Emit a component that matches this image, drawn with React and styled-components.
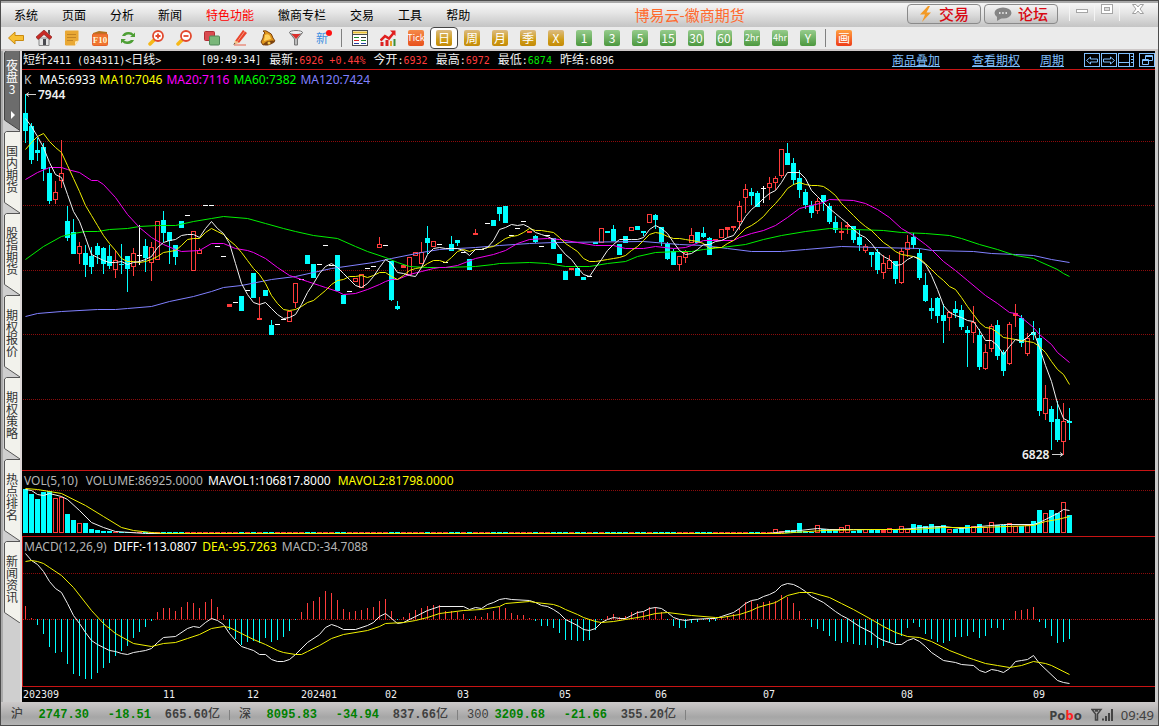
import React, { useState } from 'react'
import styled, { createGlobalStyle, css } from 'styled-components'

const CYAN = '#00ffff'
const RED = '#ff3c3c'
const LINE = '#c81414'

const menus = ['系统', '页面', '分析', '新闻', '特色功能', '徽商专栏', '交易', '工具', '帮助']
const sideTabs = ['国内期货', '股指期货', '期权报价', '期权策略', '热点排名', '新闻资讯']

const periods = [
  { text: '日', tone: 'gold' },
  { text: '周', tone: 'gold' },
  { text: '月', tone: 'gold' },
  { text: '季', tone: 'gold' },
  { text: 'X', tone: 'gold' },
  { text: '1' },
  { text: '3' },
  { text: '5' },
  { text: '15' },
  { text: '30' },
  { text: '60' },
  { text: '2hr', small: true },
  { text: '4hr', small: true },
  { text: 'Y' },
]

const quotes = [
  { label: '今开', value: '6932', color: RED },
  { label: '最高', value: '6972', color: RED },
  { label: '最低', value: '6874', color: '#00e600' },
  { label: '昨结', value: '6896', color: '#f0f0f0' },
]

const indexes = [
  { name: '沪', price: '2747.30', change: '-18.51', amount: '665.60' },
  { name: '深', price: '8095.83', change: '-34.94', amount: '837.66' },
  { name: '300', price: '3209.68', change: '-21.66', amount: '355.20' },
]

const months = [
  [0, '202309', 'start'],
  [24, '11'],
  [38, '12'],
  [49, '202401'],
  [61, '02'],
  [73, '03'],
  [90, '05'],
  [106, '06'],
  [124, '07'],
  [147, '08'],
  [169, '09'],
]

// d = down, u = up, f = flat; high, body top, body bottom, low
const candles = `d 94 113 131 143,d 123 126 160 164,d 138 150 153 161,d 143 147 169 181,d 167 173 201 204,
u 181 192 200 204,u 140 173 181 188,d 206 221 238 241,d 219 232 254 254,u 242 246 254 264,
d 245 253 265 277,d 247 256 267 274,d 243 246 255 264,d 247 248 264 274,d 245 256 266 269,
u 250 260 270 278,d 244 264 265 274,d 256 256 269 292,u 248 253 267 276,f 225 255 265,
d 239 246 258 272,u 242 247 263 281,u 221 260,d 211 220 233 242,d 232 232 241 264,
d 245 245 257 265,d 221 228,f 215,u 231 271,u 248 250 254 254,
f 205,f 205,f 246,f 256,u 304 307,f 302,d 296 311,f 290,d 273 298,u 297 318 320 320,
d 290 296,d 320 325 335 335,f 324,f 319,u 311 322,u 283 283 303 308,f 279,d 255 264,d 264 278,f 264,
f 245,f 265,d 255 291,d 295 304,f 291,u 278 282,u 274 288,f 268,f 266,u 237 244 248 248,
f 245,d 261 261 300 301,d 301 306 309 310,u 265 268,u 257 275,u 252 256,u 242 252 264 264,d 226 238 243 254,u 241 247,f 244,
f 262,d 236 244 251 251,d 240 240 243 246,f 252,d 259 270,u 229 233 235 235,f 249,f 223,d 220 226,d 207 207 214 221,
d 206 223,f 235,f 228,f 221,u 231 233,d 235 236 242 243,f 246,f 235,d 238 249,d 254 263,
d 271 280,u 268 270,d 268 276,d 277 280,f 276,d 242 244,u 228 243,d 231 233,d 225 229 241 241,d 244 255,
d 236 243,u 227 231,d 226 230,d 231 231 233 236,u 214 223,d 214 215 220 229,d 227 227 242 246,d 242 244 259 260,d 249 251 265 265,u 256 256 265 271,
u 250 252 258 263,u 228 235 243 243,d 232 243,d 227 233 237 238,d 237 238 255 255,u 239 241,u 229 238,u 227 227 230 237,u 226 226 228 231,u 201 206 222 230,
u 184 189 198 213,d 188 192 196 205,d 191 193 207 207,f 186 188 203,u 177 183 188 200,u 176 178 183 190,u 149 149 176 178,d 143 153 165 165,d 158 163 180 185,d 170 178 190 198,
d 189 192 205 209,d 201 205 213 218,u 198 201 211 214,d 195 195 202 211,d 203 206 222 224,d 216 222 230 233,u 222 231 233 240,u 222 225 227 234,d 226 226 240 243,d 230 237 245 251,
u 244 246 251 253,d 252 252 255 267,d 249 252 270 274,u 255 263 273 279,u 255 260 269 269,d 261 261 279 284,u 248 251 283 284,u 235 242 250 257,d 233 237 245 249,d 249 253 278 280,
d 273 285 301 302,d 298 308 311 319,d 297 298 316 323,d 304 315 321 343,u 311 312 318 331,d 301 309 313 318,d 305 310 327 330,d 326 330 333 367,u 306 322 333 343,d 329 335 367 370,
u 344 352 369 370,u 324 326 349 352,d 320 325 356 360,d 350 352 371 376,u 322 324 364 365,u 304 313 316 327,d 315 318 343 347,u 333 338 354 356,d 321 332 335 340,d 328 338 411 416,
u 385 398 414 420,d 406 409 422 450,d 401 419 440 442,u 403 421 442 455,d 408 421 423 440`
  .split(',')
  .map((row) => {
    const [kind, ...rest] = row.trim().split(' ')
    const n = rest.map(Number)
    if (n.length === 1) return { kind, high: n[0], top: n[0], bottom: n[0] + 1, low: n[0] + 1 }
    if (n.length === 2) return { kind, high: n[0], top: n[0], bottom: n[1], low: n[1] }
    if (n.length === 3) return { kind, high: n[0], top: n[1], bottom: n[1] + 1, low: n[2] }
    return { kind, high: n[0], top: n[1], bottom: n[2], low: n[3] }
  })

const ma5 = [
  118, 126, 136, 147, 162, 174, 177, 194, 211, 221, 237, 254, 257, 260, 262, 262, 261, 264, 262, 261,
  259, 256, 247, 242, 240, 239, 235, 234, 234, 237, 228, 221, 228, 233, 243, 263, 283, 294, 302, 304,
  302, 308, 314, 318, 317, 314, 304, 292, 283, 273, 266, 263, 267, 273, 279, 285, 287, 283, 276, 267,
  259, 263, 272, 273, 275, 276, 267, 254, 248, 247, 248, 248, 248, 250, 255, 249, 249, 247, 240, 229,
  227, 224, 225, 224, 227, 232, 234, 236, 239, 247, 254, 259, 267, 274, 276, 267, 259, 250, 244, 239,
  239, 239, 239, 237, 229, 225, 228, 233, 242, 250, 254, 253, 249, 244, 244, 241, 240, 237, 235, 226,
  216, 209, 204, 198, 193, 190, 182, 172, 172, 172, 178, 190, 196, 202, 208, 213, 218, 223, 229, 234,
  237, 243, 251, 256, 259, 265, 264, 259, 256, 259, 264, 275, 289, 305, 312, 315, 317, 320, 321, 330,
  340, 340, 345, 354, 346, 339, 341, 337, 331, 347, 365, 381, 403, 418, 421,
]

const ma10 = [
  149, 142, 136, 133, 141, 147, 152, 165, 178, 191, 205, 215, 225, 235, 243, 250, 258, 261, 261, 262,
  261, 259, 256, 252, 251, 250, 245, 239, 238, 238, 232, 228, 231, 234, 240, 245, 252, 260, 268, 274,
  283, 295, 303, 309, 310, 309, 306, 302, 300, 295, 290, 284, 280, 279, 276, 276, 275, 277, 275, 272,
  272, 276, 279, 275, 270, 268, 267, 263, 260, 260, 262, 257, 251, 249, 251, 249, 249, 247, 246, 242,
  238, 236, 235, 232, 228, 230, 230, 231, 232, 237, 243, 247, 251, 258, 261, 261, 260, 259, 258, 257,
  255, 250, 246, 240, 234, 232, 233, 236, 238, 238, 239, 240, 241, 243, 248, 247, 247, 243, 240, 234,
  228, 225, 221, 216, 209, 203, 196, 188, 184, 182, 184, 185, 185, 186, 190, 195, 203, 209, 215, 221,
  226, 230, 236, 242, 246, 251, 254, 255, 256, 258, 263, 269, 275, 280, 286, 289, 297, 306, 314, 322,
  327, 328, 332, 337, 338, 339, 340, 341, 342, 346, 352, 361, 369, 374, 384,
]

// slow lines: "bar index,y"
const ma20 =
  '0,179 2,172 4,167 6,167 7,169 9,172 11,180 12,180 13,184 15,197 17,214 19,227 21,237 23,244 25,249 26,251 29,250 31,243 33,243 35,248 37,250 38,252 39,255 40,258 42,267 44,275 45,277 47,281 49,285 50,287 52,291 53,294 55,293 57,289 59,284 60,281 61,279 62,279 64,274 66,271 68,268 69,267 70,267 72,265 75,258 78,254 79,252 80,250 82,243 84,239 87,238 89,239 92,242 95,245 98,245 100,248 103,248 105,246 108,248 110,247 111,245 113,240 118,240 119,237 121,233 123,230 125,225 127,217 129,208 131,205 133,202 134,199 138,200 140,203 142,209 144,217 146,228 148,235 150,244 151,249 153,261 155,270 157,280 160,295 162,303 164,312 165,313 166,317 168,327 169,334 171,344 172,352 174,362'
const ma60 =
  '0,259 3,246 6,236 8,233 10,231 12,231 14,229 17,228 19,226 22,225 25,225 28,221 31,218 33,216 37,218 40,223 43,228 45,231 48,235 52,238 55,246 57,251 60,257 62,262 64,266 67,267 70,267 75,266 78,264 79,263 84,262 87,263 90,266 94,266 97,263 100,261 102,256 105,252 109,251 111,251 113,249 116,247 120,244 123,239 126,235 130,231 134,228 138,229 143,230 146,232 150,233 154,235 156,238 159,244 162,249 165,255 168,258 169,261 172,269 173,273 174,276'
const ma120 =
  '0,316 2,313 6,311 12,309 15,309 17,308 21,306 24,301 28,296 31,291 33,287 36,285 41,279 45,276 48,272 51,268 58,262 61,258 66,252 69,249 72,248 75,247 79,245 84,243 88,242 103,241 109,244 113,245 117,248 121,251 126,251 130,249 136,246 142,247 149,248 151,250 158,251 161,253 165,254 168,255 171,259 174,262'
const mavol1 =
  '0,489 1,490 2,494 3,495 4,493 6,496 7,499 9,510 11,522 13,527 15,531 20,533 124,533 125,532 127,531 129,530 132,528 134,529 138,529 141,529 145,529 148,528 149,527 153,526 156,528 159,526 163,524 168,524 169,522 172,513 173,509 174,510'
const mavol2 =
  '0,488 2,489 6,493 10,505 13,516 16,527 18,530 21,532 23,533 126,533 128,532 133,530 141,529 148,529 153,527 159,527 168,525 170,521 172,519 174,516'
const diff =
  '0,553 1,560 2,564 3,571 4,581 5,588 6,592 7,603 8,615 9,623 10,632 11,640 12,644 13,647 14,650 15,651 16,653 17,654 18,652 19,651 20,650 21,648 22,642 23,637 25,636 27,628 28,626 29,627 30,622 31,618 32,620 33,624 34,633 35,640 36,646 37,648 38,650 39,654 40,654 41,659 42,661 43,661 44,659 45,654 47,642 49,634 50,627 51,624 52,626 53,629 55,629 57,625 58,622 59,616 60,613 61,618 62,623 63,622 65,616 67,610 69,606 73,606 74,609 75,607 76,608 77,604 78,602 79,599 80,598 81,599 84,600 85,602 86,605 87,606 88,609 89,613 90,619 92,625 93,629 94,630 95,628 96,622 97,619 98,617 99,618 100,618 101,615 102,612 103,611 104,608 105,607 106,608 107,612 108,617 109,619 110,620 111,619 114,618 115,618 116,616 118,612 119,608 120,603 121,600 122,599 123,596 124,594 125,591 126,585 127,583 128,584 129,587 130,591 131,596 132,599 133,602 135,611 136,615 137,618 139,626 141,632 142,637 143,640 144,642 145,644 146,644 147,640 148,638 149,641 150,646 151,652 153,660 155,662 156,664 158,665 159,670 160,672 161,669 162,670 163,672 164,668 165,661 166,660 167,659 168,655 169,663 172,680 173,682 174,683'
const dea =
  '0,561 1,560 2,561 3,563 4,567 6,575 8,587 11,610 13,623 15,633 18,643 21,646 23,643 25,642 27,638 29,634 31,628 33,626 34,627 36,633 38,639 40,644 42,650 43,652 45,654 46,654 47,651 49,645 51,638 53,634 57,630 59,626 60,623 63,622 65,620 67,617 69,613 73,610 76,609 79,606 80,603 84,601 85,602 88,604 89,606 90,609 92,614 93,617 95,621 96,622 98,621 100,619 103,616 105,613 107,612 111,615 115,617 116,617 119,614 121,610 122,607 125,602 127,595 129,592 131,592 134,597 136,603 138,609 141,619 143,626 145,632 147,636 149,637 151,641 154,650 157,657 158,659 160,663 162,665 164,667 166,665 168,661 170,663 171,665 174,674'

const volumeHead = [489, 494, 499, 492, 491, 498, 497, 514, 520, 523, 523, 529, 530, 531, 531]
const volumeTail = [
  529, 531, 530, 530, 523, 531, 532, 525, 529, 529, 530, 527, 525, 531, 529, 529, 529, 529, 530, 528,
  529, 526, 529, 524, 525, 526, 524, 526, 525, 529, 529, 527, 525, 526, 524, 527, 522, 525, 525, 523,
  526, 526, 525, 521, 510, 513, 510, 513, 502, 515,
]
const volumeTop = (i) => volumeHead[i] || volumeTail[i - 125] || 532

const macd = [
  606, 618, 625, 634, 647, 653, 652, 664, 674, 676, 679, 679, 673, 668, 663, 656, 651, 646, 638, 632,
  627, 621, 612, 608, 608, 611, 607, 602, 603, 608, 602, 599, 607, 615, 630, 639, 645, 642, 641, 643,
  638, 642, 640, 637, 631, 620, 612, 603, 601, 597, 591, 593, 600, 609, 612, 611, 610, 608, 607, 601,
  599, 611, 620, 617, 613, 610, 608, 606, 605, 605, 611, 611, 612, 614, 620, 616, 617, 613, 611, 607,
  608, 613, 615, 615, 618, 621, 626, 626, 628, 633, 640, 640, 641, 641, 640, 630, 620, 616, 614, 617,
  616, 612, 611, 612, 607, 607, 612, 620, 626, 628, 628, 623, 622, 620, 622, 621, 617, 616, 614, 609,
  602, 601, 604, 602, 601, 601, 595, 597, 603, 611, 619, 627, 629, 631, 636, 641, 643, 642, 644, 645,
  645, 645, 648, 646, 643, 643, 636, 628, 623, 627, 634, 639, 642, 643, 641, 637, 637, 636, 632, 638,
  636, 628, 628, 630, 620, 611, 610, 609, 607, 622, 628, 636, 643, 642, 639,
]

const barX = (i) => 3 + i * 6
const fromList = (list) => list.map((y, i) => `${barX(i)},${y}`).join(' ')
const fromPairs = (str) =>
  str
    .split(' ')
    .map((p) => p.split(','))
    .map(([i, y]) => `${barX(Number(i))},${y}`)
    .join(' ')

function Curve({ points, color }) {
  return <polyline points={points} fill="none" stroke={color} strokeWidth="1" transform="translate(.5 .5)" />
}

function Grid({ y, color = '#8c0c0c' }) {
  return <line x1="1" x2="100%" y1={y + 0.5} y2={y + 0.5} stroke={color} strokeDasharray="1 1" shapeRendering="crispEdges" />
}

function Bar({ x, top, bottom, kind }) {
  if (kind === 'd') return <rect x={x - 2} y={top} width="5" height={Math.max(bottom - top, 1)} fill={CYAN} />
  if (bottom - top < 4) return <rect x={x - 2} y={top} width="5" height={bottom - top} fill={kind === 'f' ? '#fff' : RED} />
  return <rect x={x - 1.5} y={top + 0.5} width="4" height={bottom - top - 1} fill="#000" stroke={RED} />
}

function PricePlot() {
  return (
    <Plot role="img" aria-label="日线">
      <svg y="-88" overflow="visible">
        {[141, 205, 270, 334, 399].map((y) => <Grid key={y} y={y} />)}
        <g shapeRendering="crispEdges">
          {candles.map((c, i) => (
            <g key={i}>
              {c.low - c.high > 1 && (
                <rect x={barX(i)} y={c.high} width="1" height={c.low - c.high} fill={{ d: CYAN, u: RED, f: '#fff' }[c.kind]} />
              )}
              <Bar x={barX(i)} top={c.top} bottom={c.bottom} kind={c.kind} />
            </g>
          ))}
        </g>
        <Curve points={fromPairs(ma120)} color="#8080ff" />
        <Curve points={fromPairs(ma60)} color="#00f000" />
        <Curve points={fromPairs(ma20)} color="#f000f0" />
        <Curve points={fromList(ma10)} color="#f0f000" />
        <Curve points={fromList(ma5)} color="#f0f0f0" />
        <path d="M4 94.5H14M4 94.5l3-2M4 94.5l3 2" stroke="#d0d0d0" fill="none" />
        <MarkText x="16" y="99">7944</MarkText>
        <MarkText x="1000" y="459">6828</MarkText>
        <path d="M1030 454.5h11M1041 454.5l-3-2M1041 454.5l-3 2" stroke="#d0d0d0" fill="none" />
      </svg>
    </Plot>
  )
}

function VolumePlot() {
  return (
    <Plot role="img" aria-label="VOL">
      <svg y="-489" overflow="visible">
        <Grid y={490} />
        <g shapeRendering="crispEdges">
          {candles.map((c, i) => (
            <Bar key={i} x={barX(i)} top={volumeTop(i)} bottom={533} kind={c.kind === 'd' ? 'd' : 'u'} />
          ))}
        </g>
        <Curve points={fromPairs(mavol1)} color="#f0f0f0" />
        <Curve points={fromPairs(mavol2)} color="#f0f000" />
      </svg>
    </Plot>
  )
}

function MacdPlot() {
  return (
    <Plot role="img" aria-label="MACD">
      <svg y="-555" overflow="visible">
        <Grid y={573} />
        <Grid y={619} color="#c01818" />
        <g shapeRendering="crispEdges">
          {macd.map((y, i) => (
            <rect
              key={i}
              x={barX(i)}
              y={Math.min(y, 619)}
              width="1"
              height={Math.max(Math.abs(y - 619), 1)}
              fill={y < 619 ? RED : CYAN}
            />
          ))}
        </g>
        <Curve points={fromPairs(diff)} color="#f0f0f0" />
        <Curve points={fromPairs(dea)} color="#f0f000" />
      </svg>
    </Plot>
  )
}

const toolIcons = [
  {
    name: '后退',
    art: <path d="M.5 8 7 2v3.500h8.500v5H7V14z" fill="#f8c033" stroke="#c98a10" />,
  },
  {
    name: '首页',
    art: (
      <>
        <path d="M3 8h10v7.500H3z" fill="#e4e4e4" stroke="#888" />
        <path d="M8 0l8 7-2 2.500-6-5-6 5L0 7z" fill="#c92a25" stroke="#7c1512" strokeWidth=".6" />
        <path d="M12 0h2v5l-2-2z" fill="#555" />
        <path d="M7 9h3v6H7z" fill="#49494f" />
      </>
    ),
  },
  {
    name: '便笺',
    art: (
      <>
        <path d="M1 1.500Q1 .5 2 .5h12.500v10L11 15.500H2Q.5 15.500 1 13z" fill="#e9a834" />
        <path d="M3 4.500h9M3 7.500h9M3 10.500h6" stroke="#c28425" />
        <path d="M14.500 10.500 11 15.500v-4z" fill="#ffe7b0" />
      </>
    ),
  },
  {
    name: 'F10',
    art: (
      <>
        <path d="M1 3l6-2 8 1v3H1z" fill="#b2731d" />
        <rect x=".5" y="4" width="15" height="11.500" rx="1" fill="#f0752f" stroke="#e4622a" />
        <text x="8" y="13" textAnchor="middle" fontFamily="Liberation Serif, serif" fontWeight="700" fontSize="9" fill="#fff6d8">F10</text>
      </>
    ),
  },
  {
    name: '刷新',
    art: (
      <g fill="#4e9f35">
        <path d="M2 6Q4 1.500 9 2q3 .2 4.500 2L15 2.500V7H10l2-1.500Q8 3.500 5 6z" />
        <path d="M14 10q-2 4.500-7 4-3-.2-4.500-2L1 13.500V9h5l-2 1.500Q8 12.500 11 10z" />
      </g>
    ),
  },
  {
    name: '放大',
    art: (
      <>
        <path d="M6 10 2 14" stroke="#f6b818" strokeWidth="3.500" strokeLinecap="round" />
        <circle cx="10" cy="6" r="5" fill="#fff" stroke="#e2492e" strokeWidth="1.800" />
        <path d="M7.500 6h5M10 3.500v5" stroke="#e2492e" strokeWidth="1.800" />
      </>
    ),
  },
  {
    name: '缩小',
    art: (
      <>
        <path d="M6 10 2 14" stroke="#f6b818" strokeWidth="3.500" strokeLinecap="round" />
        <circle cx="10" cy="6" r="5" fill="#fff" stroke="#e2492e" strokeWidth="1.800" />
        <path d="M7.500 6h5" stroke="#e2492e" strokeWidth="1.800" />
      </>
    ),
  },
  {
    name: '叠加',
    art: (
      <>
        <rect x=".5" y="1.500" width="10" height="9" rx="1" fill="#d94b50" stroke="#b22e35" />
        <rect x="5.500" y="6" width="10" height="9" rx="1" fill="#79b679" stroke="#50885a" />
      </>
    ),
  },
  {
    name: '画线',
    art: (
      <>
        <path d="M3 11 11 0l4 3L7 13z" fill="#e8442c" />
        <path d="m5 12 8-11" stroke="#f79b80" />
        <path d="M3 10.500 1.500 15 7 13z" fill="#f3c489" />
        <path d="M1.500 15l.8-2 1.200 1z" fill="#333" />
        <path d="M2 15h12" stroke="#e89080" strokeWidth="1.500" />
      </>
    ),
  },
  {
    name: '预警',
    art: (
      <>
        <path d="M3 1q3-1 5 1 4 1 5 6l2 3-12 4-2-3 2-4Q3 4 5 3z" fill="#df951c" stroke="#7c4310" />
        <path d="M5 5q3-2 5 1l1 3-7 2z" fill="#ffd15b" />
        <ellipse cx="9" cy="13" rx="6" ry="2" fill="#7c4310" transform="rotate(-17 9 13)" />
        <circle cx="9" cy="13" r="1.500" fill="#f8c94b" />
      </>
    ),
  },
  {
    name: '筛选',
    art: (
      <>
        <path d="M1.500 2.500 6.500 9v6h3V9l5-6.500z" fill="#bbb" stroke="#777" />
        <ellipse cx="8" cy="2.500" rx="6.500" ry="2" fill="#eee" stroke="#777" />
        <path d="M3.500 4h9L8 9z" fill="#dc302c" />
      </>
    ),
  },
  {
    name: '新',
    art: (
      <>
        <text x="6" y="13" textAnchor="middle" fontFamily="Noto Sans CJK SC, sans-serif" fontSize="12" fill="#3e8fe0">新</text>
        <circle cx="13" cy="3" r="3" fill="#ff1010" />
      </>
    ),
  },
]

const viewIcons = [
  {
    name: '报价',
    art: (
      <>
        <rect x=".5" y=".5" width="15" height="15" fill="#fff" stroke="#4a4a4a" />
        <path d="M1 2.500h14" stroke="#e6bd33" strokeWidth="2" />
        <path d="M1 4.500h14" stroke="#4a4a4a" />
        <path d="M2 7.500h5" stroke="#1d8d2b" />
        <path d="M9 7.500h5" stroke="#333" />
        <path d="M2 10.500h5" stroke="#d22" />
        <path d="M9 10.500h5" stroke="#1d8d2b" />
        <path d="M2 13.500h5M9 13.500h5" stroke="#2540a0" />
      </>
    ),
  },
  {
    name: '走势',
    art: (
      <>
        <path d="M2 12v4M7 10v6" stroke="#d22" strokeWidth="3" />
        <path d="M11 11v5" stroke="#e6a826" strokeWidth="2" />
        <path d="M14.500 9v7" stroke="#3c8f3a" strokeWidth="2" />
        <path d="M.5 10.500 5 6l4 2.500 5-6" fill="none" stroke="#e01f1f" strokeWidth="2.500" />
        <path d="M10 .5h5.500V6z" fill="#e01f1f" />
      </>
    ),
  },
]

const paneIcons = [
  { name: '上一个', d: 'M2.500 7.500 6.500 4v2h7v3h-7v2z' },
  { name: '下一个', d: 'M13.500 7.500 9.500 4v2h-7v3h7v2z' },
  { name: '分栏', d: 'M1 9.500h10.500M11.500 1v12M13 3.500h2M13 6.500h2M13 9.500h2' },
  { name: '窗口', d: 'M6.500 6V2.500h7v5H10M6.500 3.500h7M3.500 6.500h6v5h-6zM3.500 7.500h6' },
]

export default function App() {
  const [period, setPeriod] = useState('日')

  return (
    <Frame>
      <GlobalStyle />
      <TitleBar>
        <Menu aria-label="菜单">
          {menus.map((m) => (
            <MenuItem key={m} $hot={m === '特色功能'}>{m}</MenuItem>
          ))}
        </Menu>
        <Title>博易云-徽商期货</Title>
        <BigButton>
          <svg width="14" height="16" viewBox="0 0 14 16" aria-hidden="true">
            <path d="M9 0 1 8.500h5L3 16l9-9.500H7.500L11 0z" fill="#f29a26" />
          </svg>
          交易
        </BigButton>
        <BigButton>
          <svg width="18" height="14" viewBox="0 0 18 14" aria-hidden="true">
            <ellipse cx="9" cy="6" rx="8.500" ry="5.500" fill="#858585" />
            <path d="M3 9v5l5-3z" fill="#858585" />
            <path d="M5 6h1.500M8.200 6h1.500M11.500 6H13" stroke="#fff" strokeWidth="1.500" />
          </svg>
          论坛
        </BigButton>
        <WindowButtons>
          <button aria-label="最小化">
            <svg width="14" height="12"><rect x="1.500" y="6.500" width="11" height="3" fill="#fff" stroke="#a5a5a5" /></svg>
          </button>
          <button aria-label="最大化">
            <svg width="14" height="12">
              <rect x="1.500" y="1.500" width="11" height="9" fill="#fff" stroke="#a5a5a5" />
              <rect x="4.500" y="4.500" width="5" height="3" fill="#ddd" stroke="#a5a5a5" />
            </svg>
          </button>
          <button aria-label="关闭">
            <svg width="14" height="12">
              <path d="M1.500 1.500h3.500l2 2.500 2-2.500h3.500L9 6l3.500 4.500H9L7 8l-2 2.500H1.500L5 6z" fill="#fff" stroke="#a0a0a0" />
            </svg>
          </button>
        </WindowButtons>
      </TitleBar>

      <Toolbar>
        {toolIcons.map((t) => <IconTool key={t.name} {...t} />)}
        <Divider />
        {viewIcons.map((t) => <IconTool key={t.name} {...t} />)}
        <Tool aria-label="Tick"><Badge $tone="tick" $small>Tick</Badge></Tool>
        {periods.map((p) => (
          <Tool key={p.text} $active={p.text === period} onClick={() => setPeriod(p.text)}>
            <Badge $tone={p.tone} $small={p.small}>{p.text}</Badge>
          </Tool>
        ))}
        <Divider />
        <Tool><Badge $tone="draw">画</Badge></Tool>
      </Toolbar>

      <Main>
        <SideBar>
          <SideTab $active>
            <TabShape viewBox="0 0 16 80" aria-hidden="true">
              <path d="M16-.5H2.500L.5 2V69L16 79.500z" fill="#6c6c6c" stroke="#444" />
              <path d="M7 60l4 4-4 4z" fill="#fff" />
            </TabShape>
            <span>夜盘3</span>
          </SideTab>
          {sideTabs.map((t) => (
            <SideTab key={t}>
              <TabShape viewBox="0 0 16 82" aria-hidden="true">
                <path d="M16 .5H2.500L.5 2V71.500L16 82" fill="#f2f2ec" stroke="#555" />
              </TabShape>
              <span>{t}</span>
            </SideTab>
          ))}
        </SideBar>

        <Charts>
          <QuoteRow>
            <Symbol>短纤<Num>2411 (034311)&lt;</Num>日线<Num>&gt;</Num></Symbol>
            <Num>[09:49:34]</Num>
            <span>最新<Num>:</Num><Num $color={RED}>6926 +0.44%</Num></span>
            {quotes.map((q) => (
              <span key={q.label}>{q.label}<Num>:</Num><Num $color={q.color}>{q.value}</Num></span>
            ))}
            <Links>
              <a href="#overlay">商品叠加</a>
              <a href="#options">查看期权</a>
              <a href="#period">周期</a>
            </Links>
            <PaneButtons>
              {paneIcons.map((p) => (
                <button key={p.name} aria-label={p.name}>
                  <svg width="16" height="14" viewBox="0 0 16 14"><path d={p.d} fill="none" stroke="#80c0ff" /></svg>
                </button>
              ))}
            </PaneButtons>
          </QuoteRow>

          <PricePane>
            <Legend>
              <Mark $color="#c0c0c0" $after={4}>K</Mark>
              <Mark $color="#ffffff">MA5:6933</Mark>
              <Mark $color="#ffff00">MA10:7046</Mark>
              <Mark $color="#ff00ff">MA20:7116</Mark>
              <Mark $color="#00ff00">MA60:7382</Mark>
              <Mark $color="#8080ff">MA120:7424</Mark>
            </Legend>
            <PricePlot />
          </PricePane>
          <VolumePane>
            <Legend $gap={5}>
              <Mark $color="#b4b4b4" $after={3}>VOL(5,10)</Mark>
              <Mark $color="#b4b4b4">VOLUME:86925.0000</Mark>
              <Mark $color="#ffffff" $after={2}>MAVOL1:106817.8000</Mark>
              <Mark $color="#ffff00">MAVOL2:81798.0000</Mark>
            </Legend>
            <VolumePlot />
          </VolumePane>
          <MacdPane>
            <Legend $gap={5}>
              <Mark $color="#b4b4b4" $after={2}>MACD(12,26,9)</Mark>
              <Mark $color="#ffffff">DIFF:-113.0807</Mark>
              <Mark $color="#ffff00">DEA:-95.7263</Mark>
              <Mark $color="#b4b4b4">MACD:-34.7088</Mark>
            </Legend>
            <MacdPlot />
          </MacdPane>
          <Axis aria-label="日期">
            {months.map(([i, text, anchor]) => (
              <AxisText key={text} x={anchor ? 1 : barX(i)} y="11" textAnchor={anchor || 'middle'}>{text}</AxisText>
            ))}
          </Axis>
        </Charts>
      </Main>

      <StatusBar>
        {indexes.map((x) => (
          <IndexGroup key={x.name}>
            <span>{x.name}</span>
            <Change>{x.price}</Change>
            <Change>{x.change}</Change>
            <Amount>{x.amount}<i>亿</i></Amount>
          </IndexGroup>
        ))}
        <Brand>Po<em>b</em>o</Brand>
        <svg width="22" height="14" aria-hidden="true">
          <path d="M1 1.500h9L6.500 6v6h-2V6zM4 3h3" fill="none" stroke="#444" strokeWidth="1.500" />
          <path d="M11 11.500h2M15 13V8M18 13V5M21 13V1" stroke="#444" strokeWidth="2" />
        </svg>
        <Clock>09:49</Clock>
      </StatusBar>
    </Frame>
  )
}

function IconTool({ name, art }) {
  return (
    <Tool aria-label={name}>
      <svg width="16" height="16" viewBox="0 0 16 16">{art}</svg>
    </Tool>
  )
}

const GlobalStyle = createGlobalStyle`
  * { box-sizing: border-box; }
  body {
    margin: 0;
    background: #cbcbcb;
    font-family: "Noto Sans CJK SC", sans-serif;
    font-size: 12px;
    line-height: 16px;
  }
  button {
    padding: 0;
    border: 0;
    background: none;
    font: inherit;
    color: inherit;
    cursor: pointer;
  }
  svg { display: block; flex: none; }
`

const Frame = styled.div`
  display: flex;
  flex-direction: column;
  min-height: 100vh;
  padding-top: 2px;
  border: 1px solid #4c4c4c;
  background: #a8a8a8;
  white-space: nowrap;
`

const TitleBar = styled.header`
  display: flex;
  align-items: flex-start;
  height: 24px;
  padding-left: 13px;
  background: linear-gradient(#f6f6f6, #e6e6e6 40%, #c4c4c4);
`

const Menu = styled.nav`
  display: flex;
  gap: 24px;
`

const MenuItem = styled.button`
  height: 24px;
  color: ${(p) => (p.$hot ? '#ff0000' : '#000')};
`

const Title = styled.div`
  flex: 1;
  padding-left: 2px;
  text-align: center;
  font-size: 15px;
  line-height: 24px;
  color: #ff6a2e;
`

const BigButton = styled.button`
  display: flex;
  align-items: center;
  justify-content: center;
  gap: 6px;
  width: 74px;
  height: 20px;
  margin: 1px 3px 0 0;
  border: 1px solid #8a8a8a;
  border-radius: 4px;
  background: linear-gradient(#f4f4f4, #d8d8d8 60%, #c2c2c2);
  color: #d80a14;
  font-size: 15px;
  font-weight: 500;
  line-height: 18px;
`

const WindowButtons = styled.div`
  display: flex;
  padding: 0 3px 0 8px;

  button {
    display: flex;
    justify-content: center;
    align-items: flex-start;
    width: 25px;
    height: 18px;
    border-left: 1px solid #f4f4f4;
  }
  button:last-child {
    width: 36px;
  }
`

const Toolbar = styled.div`
  display: flex;
  align-items: center;
  height: 24px;
  padding-left: 1px;
  border-bottom: 2px solid #cdc8c8;
  background: #ebebeb;
`

const Tool = styled.button`
  display: flex;
  align-items: center;
  justify-content: center;
  width: 28px;
  height: 22px;
  ${(p) =>
    p.$active &&
    css`
      border: 1px solid #444;
      border-radius: 4px;
      background: #fff;
    `}
`

const Divider = styled.span`
  width: 1px;
  height: 18px;
  margin: 0 4px 0 3px;
  background: #808080;
`

const tones = {
  gold: 'linear-gradient(#dcbc84, #cf9d18 60%, #c48a08)',
  tick: 'linear-gradient(#f58a48, #e8501c)',
  draw: 'linear-gradient(#ffa040, #ee3c18)',
}

const Badge = styled.span`
  display: flex;
  align-items: center;
  justify-content: center;
  width: 16px;
  height: 16px;
  border-radius: 2px;
  background: ${(p) => tones[p.$tone] || 'linear-gradient(#96cc8c, #4c983e)'};
  color: #fff;
  font-size: ${(p) => (p.$small ? 9 : 12)}px;
`

const Main = styled.main`
  flex: 1;
  display: flex;
  padding-right: 3px;
  background: #cbcbcb;
`

const SideBar = styled.nav`
  display: flex;
  flex-direction: column;
  width: 21px;
  padding-left: 3px;
  border-right: 2px solid #ddd8d8;
  background: linear-gradient(90deg, #aaa 2px, #cfcfcf 2px);
`

const SideTab = styled.button`
  position: relative;
  height: ${(p) => (p.$active ? 80 : 82)}px;
  padding: ${(p) => (p.$active ? '8px 2px 0' : '14px 2px 0')};
  color: ${(p) => (p.$active ? '#fff' : '#333')};
  display: flex;
  align-items: flex-start;
  justify-content: center;

  span {
    position: relative;
    width: 12px;
    line-height: 12px;
    white-space: normal;
    word-break: break-all;
  }
`

const TabShape = styled.svg`
  position: absolute;
  inset: 0;
  width: 100%;
  height: 100%;
`

const Charts = styled.section`
  flex: 1;
  min-width: 0;
  display: flex;
  flex-direction: column;
  overflow: hidden;
  background: #000;
`

const QuoteRow = styled.div`
  display: flex;
  align-items: center;
  gap: 8px;
  height: 19px;
  padding-left: 1px;
  border-bottom: 1px solid ${LINE};
  color: #f0f0f0;
`

const Num = styled.span`
  font-family: "DejaVu Sans Mono", monospace;
  font-size: 10px;
  white-space: pre;
  color: ${(p) => p.$color || '#f0f0f0'};

  & + span {
    margin-left: 0;
  }
`

const Symbol = styled.h1`
  width: 170px;
  margin: 0;
  font-size: 12px;
  font-weight: 400;
`

const Links = styled.div`
  display: flex;
  flex: 1;
  justify-content: flex-end;

  a {
    color: #80c0ff;
    text-underline-offset: 1px;
  }
  a + a {
    margin-left: 32px;
  }
  a:last-child {
    margin: 0 12px 0 20px;
  }
`

const PaneButtons = styled.div`
  display: flex;
  gap: 1px;

  button {
    border: 1px solid #80c0ff;
    width: 16px;
    height: 14px;
    overflow: hidden;
  }
  svg {
    margin: -1px;
  }
  button:last-child {
    margin-left: 4px;
  }
`

const Pane = styled.div`
  display: flex;
  flex-direction: column;
  border-bottom: 1px solid ${LINE};
`

const PricePane = styled(Pane)`
  flex: 1;
  min-height: 401px;
`

const VolumePane = styled(Pane)`
  height: 66px;
`

const MacdPane = styled(Pane)`
  height: 150px;
  box-shadow: inset 1px 0 ${LINE};
`

const Legend = styled.div`
  display: flex;
  gap: ${(p) => p.$gap || 4}px;
  height: 18px;
  padding-left: 2px;
  font-family: "Noto Sans", sans-serif;
  line-height: 20px;
`

const Mark = styled.span`
  color: ${(p) => p.$color};
  margin-right: ${(p) => p.$after || 0}px;
`

const Plot = styled.svg`
  flex: 1;
  width: 100%;
  min-height: 0;
  overflow: visible;
`

const MarkText = styled.text`
  fill: #f0f0f0;
  font-family: "Noto Sans", sans-serif;
  font-size: 12px;
  font-weight: 600;
`

const Axis = styled.svg`
  width: 100%;
  height: 15px;
`

const AxisText = styled.text`
  fill: #f0f0f0;
  font-family: "DejaVu Sans Mono", monospace;
  font-size: 10px;
`

const StatusBar = styled.footer`
  display: flex;
  align-items: center;
  height: 23px;
  padding: 2px 4px 0 10px;
  background: linear-gradient(#cdcaca, #a6a6a6 65%, #b4b4b4);
  color: #404040;
  font-family: "Liberation Mono", "Noto Sans CJK SC", monospace;
`

const IndexGroup = styled.div`
  display: grid;
  grid-template-columns: 26px 52px 62px 69px;
  width: 219px;
  height: 16px;
  margin-right: 9px;
  background: linear-gradient(#808080, #808080) right / 1px 10px no-repeat;
  font-weight: 500;
`

const Change = styled.span`
  text-align: right;
  font-weight: 700;
  color: #008000;
`

const Amount = styled.span`
  text-align: right;
  font-weight: 700;

  i {
    font-style: normal;
    font-weight: 500;
  }
`

const Brand = styled.strong`
  margin: 0 9px 0 auto;
  font-family: "Noto Sans", sans-serif;
  font-size: 13px;

  em {
    font-style: normal;
    color: #ff2020;
  }
`

const Clock = styled.time`
  margin-left: 8px;
  font-family: "Noto Sans", sans-serif;
  font-size: 13px;
`
